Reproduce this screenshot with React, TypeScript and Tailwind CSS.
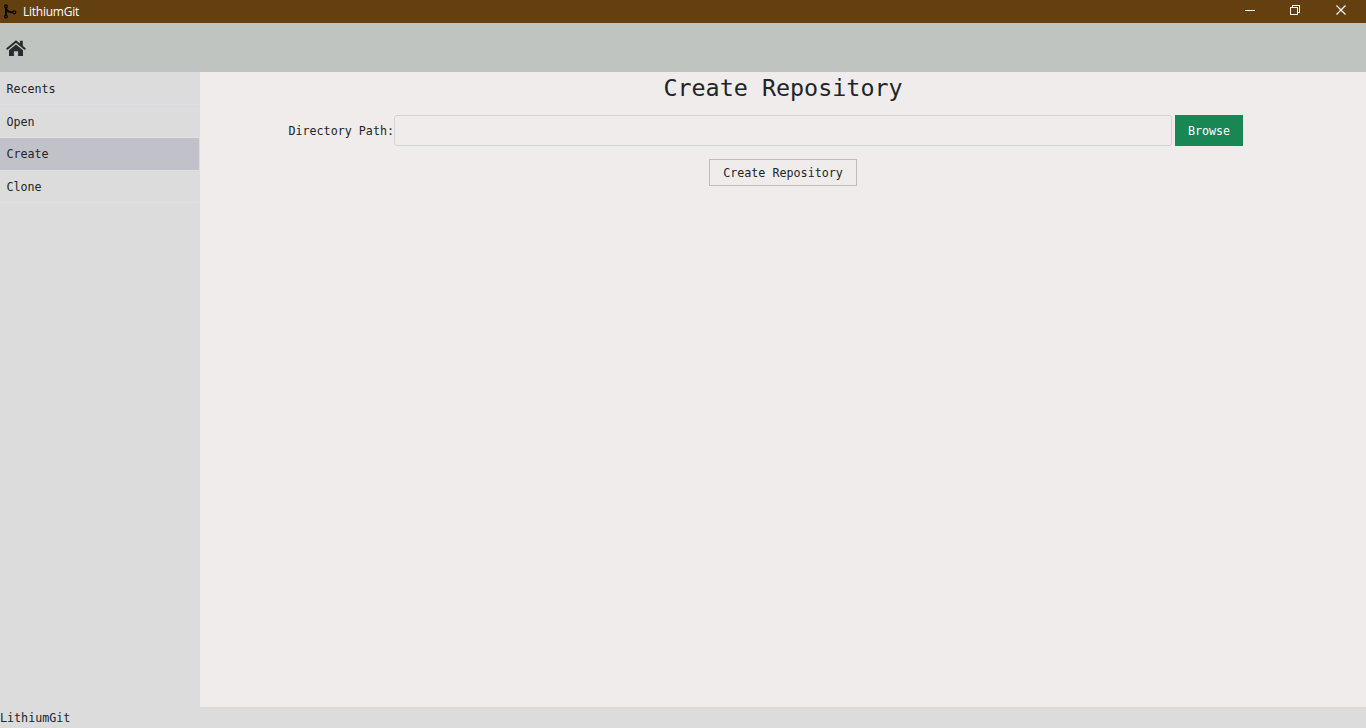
import React from "react";

const menu = [
  { label: "Recents", size: "h-[33px] pt-0.5" },
  { label: "Open", size: "h-[33px] pt-0.5" },
  { label: "Create", size: "h-[33px] pt-px" },
  { label: "Clone", size: "h-8 pt-0.5" },
];

function TitleBar() {
  return (
    <div className="flex h-[23px] shrink-0 items-center bg-[#643f0f] text-white">
      <svg className="ml-[3px] h-4 w-[14px] shrink-0" viewBox="0 0 14 16" fill="none" stroke="#0b0703" strokeWidth="1.3">
        <circle cx="3" cy="2.300" r="1.300" />
        <circle cx="3" cy="12.500" r="1.300" />
        <circle cx="11.300" cy="8.300" r="1.500" />
        <path d="M3 3.500v7.600M3 4.700C4 7.200 6.500 8.300 9.600 8.300" strokeWidth="2" />
      </svg>
      <span className="ml-[6px] flex-1 font-['Open_Sans','Noto_Sans',sans-serif] text-[12px] leading-4 tracking-[-0.25px]">LithiumGit</span>
      <svg className="h-[23px] w-[136px]" viewBox="0 0 136 23" fill="none" stroke="white" shapeRendering="crispEdges">
        <path d="M15 10.5h10" />
        <path d="M60.500 7.500h7v7h-7zM62.500 7.500v-2h7v7h-2" />
        <path d="M106.500 5.500l9 9M115.500 5.500l-9 9" strokeWidth="1.2" shapeRendering="auto" />
      </svg>
    </div>
  );
}

function HomeIcon() {
  return (
    <svg className="mt-px h-[18px] w-5" viewBox="0 0 20 18" fill="#292b2c">
      <path d="M10 5.600 3 11.300V17h4.900v-4.800h4.200V17H17v-5.700z" />
      <path d="M.7 10.300 10 2.500l9.300 7.800" fill="none" stroke="#292b2c" strokeWidth="2" />
      <path d="M13.900 1.700h2.900v6.200l-2.900-2.500z" />
    </svg>
  );
}

function Sidebar() {
  return (
    <nav className="w-[200px] shrink-0 border-r border-[#dcdce2] bg-[#dcdcdc]">
      {menu.map((item) => (
        <div
          key={item.label}
          className={`flex items-center border-b border-[#dee0e6] pl-[6.400px] ${item.size} ${item.label === "Create" ? "bg-[#c1c1ca]" : ""}`}
        >
          {item.label}
        </div>
      ))}
    </nav>
  );
}

export default function App() {
  return (
    <div className="flex h-screen flex-col overflow-hidden bg-[#f0eceb] font-['DejaVu_Sans_Mono',monospace] text-[11.69px] leading-[19px] text-[#212529]">
      <TitleBar />
      <header className="flex h-[49px] shrink-0 items-center bg-[#bfc4c0] pl-[6px]">
        <HomeIcon />
      </header>
      <div className="flex min-h-0 flex-1">
        <Sidebar />
        <main className="flex min-w-0 flex-1 flex-col items-center">
          <h1 className="pt-px text-[23.38px] leading-[31px]">Create Repository</h1>
          <div className="mt-[11px] flex h-[31px] w-full items-center">
            <label className="w-[194px] pt-0.5 text-right">Directory Path:</label>
            <input className="h-[31px] w-[778px] rounded-[3px] border border-[#ced4da] bg-transparent px-2 outline-none" />
            <button className="ml-[3px] h-[31px] w-[68px] bg-[#198754] pt-0.5 text-white">Browse</button>
          </div>
          <button className="mt-[13px] h-[27px] w-[148px] border border-[#bdbdbd] pt-0.5">Create Repository</button>
        </main>
      </div>
      <footer className="flex h-[21px] shrink-0 items-center bg-[#dcdcdc] pt-0.5">LithiumGit</footer>
    </div>
  );
}
